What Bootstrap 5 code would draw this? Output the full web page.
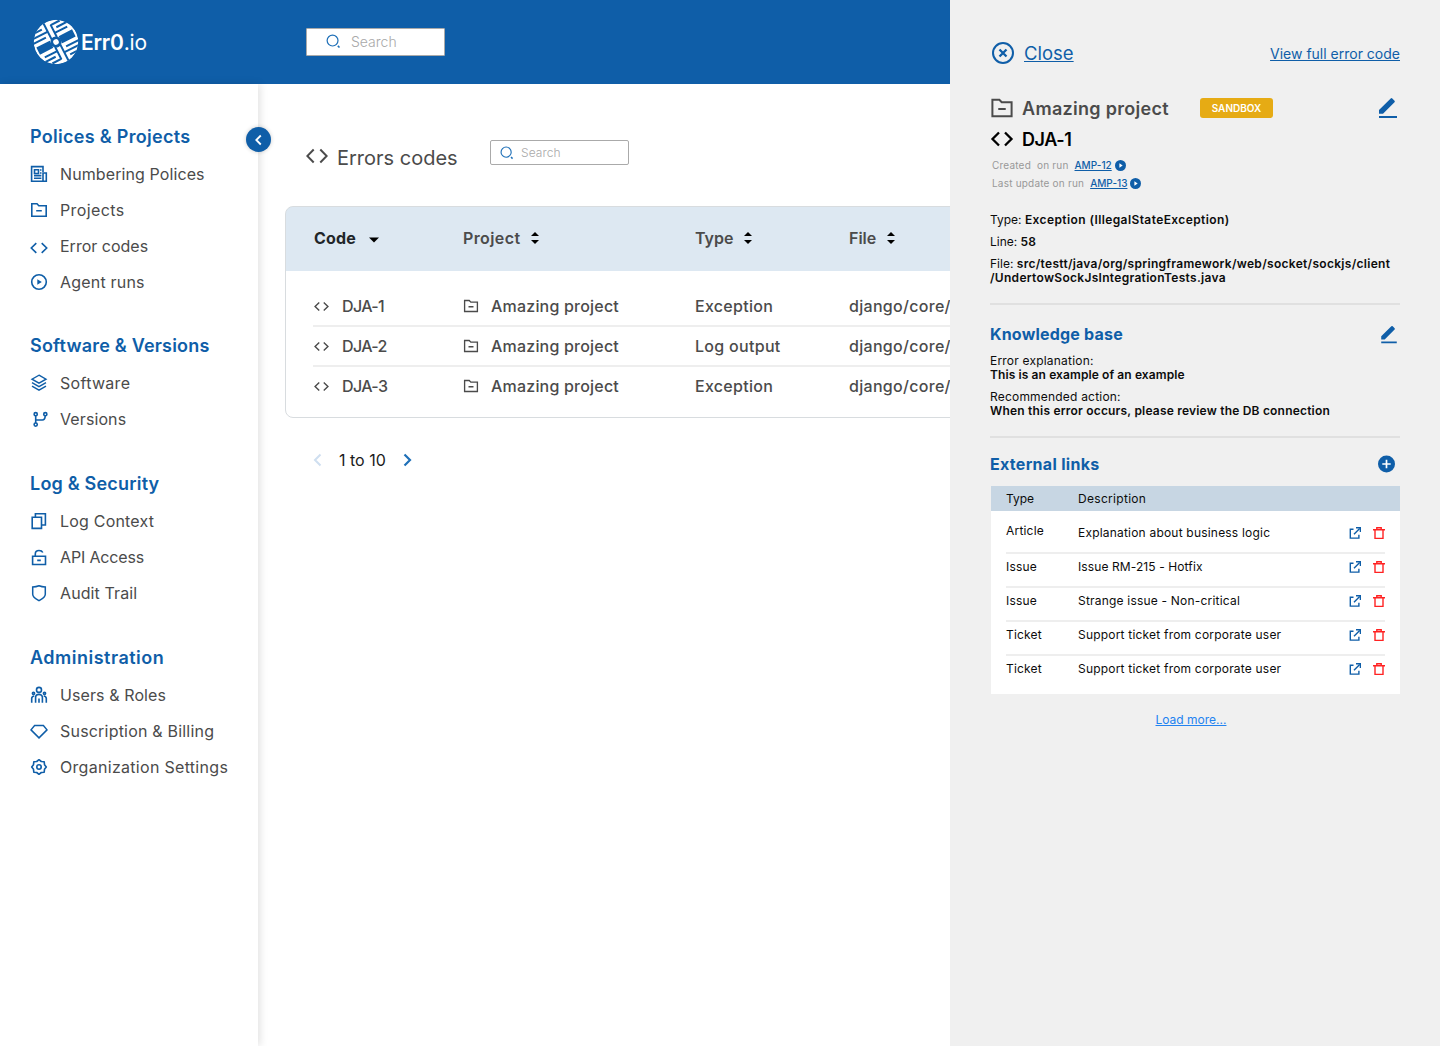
<!DOCTYPE html>
<html lang="en">
<head>
<meta charset="utf-8">
<meta name="viewport" content="width=device-width, initial-scale=1">
<title>Err0.io - Errors codes</title>
<link href="https://cdn.jsdelivr.net/npm/bootstrap@5.3.0/dist/css/bootstrap.min.css" rel="stylesheet">
<style>
:root{--brand:#0f5ea8;--ink:#4b4b4b}
body{font-family:Inter,"Liberation Sans",sans-serif;font-size:16px;color:var(--ink);background:#fff}
svg{display:block;flex:none;fill:none;stroke:currentColor}
a{color:var(--brand);text-underline-offset:1px;text-decoration-thickness:1px}
.ls-1{letter-spacing:.1px}.ls-2{letter-spacing:.2px}.ls-3{letter-spacing:.3px}.ls-4{letter-spacing:.4px}.ls-5{letter-spacing:.5px}
.ls-n1{letter-spacing:-.15px}
.brand-ink{color:var(--brand)}
.danger-ink{color:#f22;margin-left:12px}
.shell{height:1046px}
.topbar{height:84px;background:var(--brand);padding-left:33px}
.logo-name{font-size:21px;font-weight:600;letter-spacing:-.2px;margin-left:2px;width:225px;line-height:1}
.logo-name span{font-weight:400;letter-spacing:-.2px}
.searchbox{width:139px;border:1px solid #aaa;border-radius:1px;background:#fff;color:#a9a9a9;font-weight:300}
.searchbox svg{color:#1f70b8}
.search-top{height:28px;font-size:14px;padding-left:19px;gap:10px;padding-bottom:1px}
.search-page{height:25px;font-size:12px;padding:1px 0 0 9px;gap:7px;border-radius:2px;margin-top:-8px}
.sidebar{width:258px;padding:34px 0 0 30px;box-shadow:2px 0 8px rgba(0,0,0,.12);background:#fff;z-index:1}
.side-group{margin-bottom:28px}
.side-group:first-of-type{margin-bottom:27px}
.side-group h2{height:38px;line-height:37px;font-size:18px;font-weight:600;color:var(--brand);margin:0;white-space:nowrap}
.side-item{height:36px;gap:12px;white-space:nowrap}
.side-item svg{color:var(--brand);stroke-width:1.6}
.collapse-btn{left:246px;top:43px;width:25px;height:25px;background:var(--brand);color:#fff;box-shadow:0 0 4px rgba(0,0,0,.2)}
.content{padding:56px 0 0 27px}
.page-head{height:33px;margin:0 0 33px 21px;padding-bottom:1px}
.page-head h1{font-size:20px;font-weight:400;margin:0 0 0 9px;padding-top:3px;width:153px;line-height:1}
.codes{width:720px;height:212px;border:1px solid #d8dcdf;border-radius:8px;overflow:hidden}
.codes-head{height:65px;margin:-1px -1px 0;padding:0 0 2px 28px;background:#dde8f2;border:1px solid #b9cbd9;border-bottom:0;border-radius:8px 8px 0 0;font-weight:600}
.codes-head svg{margin-left:10px}
.codes-head .arrow-down{margin:4px 0 0 13px}
.codes-body{padding:16px 0 0 27px;font-weight:500}
.codes-row{height:40px;border-bottom:2px solid #eee;padding-left:1px}
.codes-row:last-child{height:38px;border:0}
.codes-row .c-code{gap:13px;letter-spacing:-.65px}
.codes-row .c-project{gap:12px}
.c-code{width:149px}.c-project{width:232px}.c-type{width:154px}
.pager{margin:30px 0 0 28px;height:24px;color:#1b1b1b;gap:17px}
.pager .prev{color:#cfdff0}.pager .next{color:#1f70b8}
.panel{width:490px;background:#f0f0f0;padding:36px 40px 0;color:#0c0c0c;font-size:12px}
.close-row{height:34px;margin-bottom:22px}
.close-row .close-link{font-size:18.5px;margin-left:9px;padding-top:2px}
.close-row svg{margin-left:1px}
.close-row .full-link{font-size:14px}
.proj-row{height:32px;font-size:18px;font-weight:600;color:var(--ink)}
.pencil-lg{margin-right:2px}
.tag-sandbox{width:73px;height:20px;border-radius:3px;background:#e6ab14;color:#fff;font-size:10px;font-weight:600;margin-left:31px;letter-spacing:0}
.code-row{height:30px;font-size:18px;font-weight:600;color:#000;margin-bottom:2px}
.code-row span{letter-spacing:-.4px}
.run-row{height:18px;font-size:10px;color:#989898;padding-left:2px;white-space:pre}
.run-row a{margin:0 3px 0 6px;font-weight:500}
.facts{padding-top:8px}
.facts-first{padding-top:21px}
.facts p{margin:0 0 8px;line-height:14px}
.facts b{font-weight:600}
.rule{height:2px;background:#e0e0e0;margin:18px 0 17px}
.rule-links{margin-bottom:14px}
.panel h3{font-size:16px;font-weight:700;color:var(--brand);margin:0;line-height:24px}
.facts p:last-child{margin:0}
.links{margin:10px 0 0 1px;background:#fff}
.links-head{height:25px;background:#c7d6e3;padding:0 15px}
.links-body{padding:9px 15px 12px}
.links-row{height:34px;padding-bottom:6px;border-bottom:2px solid #eee;letter-spacing:.2px}
.links-row:last-child{height:26px;padding:0;border:0}
.l-type{width:72px}
.more-row{padding:17px 8px 0 0}
.more-row a{color:#2383f0}
</style>
<script src="https://cdn.jsdelivr.net/npm/bootstrap@5.3.0/dist/js/bootstrap.bundle.min.js"></script>
</head>
<body>
<svg width="0" height="0" class="position-absolute" aria-hidden="true">
<symbol id="i-search" viewBox="0 0 16 16"><circle cx="7" cy="7" r="5.8" stroke-width="1.3"/><path d="M12.6 12.6l1.8 1.8" stroke-width="1.7"/></symbol>
<symbol id="i-code" viewBox="0 0 18 18"><path d="M6.3 4.2L1.3 9l5 4.800M11.700 4.200L16.700 9l-5 4.800"/></symbol>
<symbol id="i-folder" viewBox="0 0 18 18"><path d="M1.800 2.800H7l1.800 1.900h7.400v10.500H1.800zM6.200 9.800h5.600"/></symbol>
<symbol id="i-play" viewBox="0 0 18 18"><circle cx="9" cy="9" r="7.300"/><path d="M7.300 6.300v5.400L11.800 9z" fill="currentColor" stroke="none"/></symbol>
<symbol id="i-news" viewBox="0 0 18 18"><path d="M13 7V1.600H1.600v14.600h14.700V8H13v8M4.500 4.700h4v3.800h-4zM10 5h1.500M10 8h1.500M4 10.600h7.400M4 13.300h7.400"/></symbol>
<symbol id="i-layers" viewBox="0 0 18 18"><path d="M9 1.200l7 4-7 4-7-4zM2 8.600l7 4 7-4M2 12.200l7 4 7-4" stroke-width="1.400"/></symbol>
<symbol id="i-branch" viewBox="0 0 18 18"><circle cx="5.700" cy="4.200" r="1.600"/><circle cx="5.700" cy="14.600" r="1.600"/><circle cx="15.300" cy="4.200" r="1.600"/><path d="M5.700 5.800v7.200M5.700 10h6.500q3 0 3-4.200"/></symbol>
<symbol id="i-copy" viewBox="0 0 18 18"><path d="M2.200 5.300h9.300v11.100H2.200zM5.400 5V1.700h10v11.300h-3.600"/></symbol>
<symbol id="i-lock" viewBox="0 0 18 18"><path d="M2.600 8.300h12.900v8.200H2.600zM5.300 8.300V6q0-3.500 3.700-3.500 2.900 0 3.800 2M7.200 12.400h3.600"/></symbol>
<symbol id="i-shield" viewBox="0 0 18 18"><path d="M9 1.800c2.500 1 4.300 1.200 6.300 1.200v7.200c0 3.300-3.400 4.700-6.300 6.500-2.900-1.800-6.300-3.200-6.300-6.500V3C4.700 3 6.500 2.800 9 1.800z" stroke-width="1.500"/></symbol>
<symbol id="i-users" viewBox="0 0 18 18"><circle cx="9" cy="3.900" r="2.500"/><path d="M5.600 16.800V11.500c0-4.200 6.800-4.200 6.800 0v5.300M9 12.600v4.200M1.700 16.800v-4.500q.2-2 2.600-2.300M16.300 16.800v-4.500q-.2-2-2.600-2.300"/><circle cx="3.500" cy="7.300" r="1.100"/><circle cx="14.500" cy="7.300" r="1.100"/></symbol>
<symbol id="i-gem" viewBox="0 0 18 18"><path d="M4.600 3.500h8.800L17 7.900l-8 8-8-8z" stroke-width="1.500"/></symbol>
<symbol id="i-gear" viewBox="0 0 18 18"><path d="M9 1.700L11.300 3.500 14.200 3.800 14.500 6.700 16.300 9 14.500 11.300 14.200 14.200 11.300 14.500 9 16.300 6.700 14.500 3.800 14.200 3.500 11.300 1.700 9 3.500 6.700 3.800 3.800 6.700 3.500z" stroke-linejoin="round"/><circle cx="9" cy="9" r="2.200"/></symbol>
<symbol id="i-sort" viewBox="0 0 10 14"><path d="M1 5L5 1l4 4zM1 9l4 4 4-4z" fill="#000" stroke="none"/></symbol>
<symbol id="i-pencil" viewBox="0 0 20 22"><path d="M1 13L12.700 1.500q.8-.8 1.600 0l2.200 2.200q.8.800 0 1.600L5 16.800H1zM1 19h18v2H1z" fill="currentColor" stroke="none"/></symbol>
<symbol id="i-playdot" viewBox="0 0 10 10"><circle cx="5" cy="5" r="5" fill="currentColor" stroke="none"/><path d="M4 3v4l3-2z" fill="#fff" stroke="none"/></symbol>
<symbol id="i-open" viewBox="0 0 12 12"><path d="M4.500 2.200H1.300v8.900h8.600V7.800M5 7.200l5.700-5.700" stroke-width="1.400"/><path d="M7 .8h4.400v4.300" stroke-width="1.400"/></symbol>
<symbol id="i-trash" viewBox="0 0 12 12"><path d="M0 2.800h12M2 3v8.400h8V3M3.800 2.600V.7h4.400v1.900" stroke-width="1.400"/></symbol>
</svg>

<div class="shell d-flex overflow-hidden">
  <div class="d-flex flex-column flex-grow-1 overflow-hidden">
    <header class="topbar d-flex align-items-center text-white">
      <svg width="46" height="46" viewBox="-23 -23 46 46">
        <defs><clipPath id="disc"><circle r="22.300"/></clipPath></defs>
        <g clip-path="url(#disc)" stroke="none"><circle r="22.300" fill="#fff"/>
          <g transform="rotate(-27)" stroke="#0f5ea8" stroke-width="2">
            <path d="M-2.700-23V-4M3-18V-4M2.700 23V4M-3 18V4"/>
            <path d="M3-17.500H13M7-13H23M3-8.700H17M-13 17.500H-3M-23 13H-7M-17 8.700H-3"/>
            <path d="M-23-8.500H-7M-23-13H-3M-23-17.500H-7M23 8.500H7M23 13H3M23 17.500H7"/>
            <path d="M-19-3H-6V3H-19zM19-3H6V3H19z" fill="#0f5ea8"/>
            <circle r="4.200" fill="#fff" stroke-width="2.800"/>
          </g></g>
      </svg>
      <div class="logo-name">Err0<span>.io</span></div>
      <div class="searchbox search-top d-flex align-items-center"><svg width="15" height="15"><use href="#i-search"/></svg><span>Search</span></div>
    </header>
    <div class="d-flex flex-grow-1 position-relative">
      <nav class="sidebar flex-shrink-0">
        <section class="side-group"><h2 class="ls-3">Polices &amp; Projects</h2>
          <div class="side-item d-flex align-items-center"><svg width="18" height="18"><use href="#i-news"/></svg><span class="ls-1">Numbering Polices</span></div>
          <div class="side-item d-flex align-items-center"><svg width="18" height="18"><use href="#i-folder"/></svg><span class="ls-4">Projects</span></div>
          <div class="side-item d-flex align-items-center"><svg width="18" height="18" class="mt-1"><use href="#i-code"/></svg><span>Error codes</span></div>
          <div class="side-item d-flex align-items-center"><svg width="18" height="18"><use href="#i-play"/></svg><span class="ls-2">Agent runs</span></div>
        </section>
        <section class="side-group"><h2 class="ls-2">Software &amp; Versions</h2>
          <div class="side-item d-flex align-items-center"><svg width="18" height="18"><use href="#i-layers"/></svg><span class="ls-3">Software</span></div>
          <div class="side-item d-flex align-items-center"><svg width="18" height="18"><use href="#i-branch"/></svg><span class="ls-1">Versions</span></div>
        </section>
        <section class="side-group"><h2 class="ls-2">Log &amp; Security</h2>
          <div class="side-item d-flex align-items-center"><svg width="18" height="18"><use href="#i-copy"/></svg><span class="ls-2">Log Context</span></div>
          <div class="side-item d-flex align-items-center"><svg width="18" height="18"><use href="#i-lock"/></svg><span class="ls-n1">API Access</span></div>
          <div class="side-item d-flex align-items-center"><svg width="18" height="18"><use href="#i-shield"/></svg><span class="ls-1">Audit Trail</span></div>
        </section>
        <section class="side-group"><h2 class="ls-5">Administration</h2>
          <div class="side-item d-flex align-items-center"><svg width="18" height="18"><use href="#i-users"/></svg><span class="ls-1">Users &amp; Roles</span></div>
          <div class="side-item d-flex align-items-center"><svg width="18" height="18"><use href="#i-gem"/></svg><span class="ls-2">Suscription &amp; Billing</span></div>
          <div class="side-item d-flex align-items-center"><svg width="18" height="18"><use href="#i-gear"/></svg><span class="ls-3">Organization Settings</span></div>
        </section>
      </nav>
      <div class="collapse-btn position-absolute rounded-circle d-flex align-items-center justify-content-center z-3"><svg width="9" height="12" viewBox="0 0 9 12"><path d="M6.800 1.500L2.300 6l4.500 4.500" stroke-width="1.800"/></svg></div>
      <main class="content flex-grow-1 overflow-hidden">
        <div class="page-head d-flex align-items-center">
          <svg width="22" height="22" viewBox="0 0 22 22" stroke-width="2"><path d="M7.700 4.500L1.300 11l6.400 6.500M14.300 4.500l6.400 6.500-6.400 6.500"/></svg>
          <h1>Errors codes</h1>
          <div class="searchbox search-page d-flex align-items-center"><svg width="14" height="14"><use href="#i-search"/></svg><span class="ls-1">Search</span></div>
        </div>
        <div class="codes">
          <div class="codes-head d-flex align-items-center">
            <div class="c-code text-dark fw-bold d-flex align-items-center"><span class="ls-2">Code</span><svg width="10" height="6" viewBox="0 0 10 6" class="arrow-down"><path d="M0 .5h10L5 5.500z" fill="#000" stroke="none"/></svg></div>
            <div class="c-project d-flex align-items-center"><span class="ls-4">Project</span><svg width="10" height="14"><use href="#i-sort"/></svg></div>
            <div class="c-type d-flex align-items-center">Type<svg width="10" height="14"><use href="#i-sort"/></svg></div>
            <div class="d-flex align-items-center">File<svg width="10" height="14"><use href="#i-sort"/></svg></div>
          </div>
          <div class="codes-body">
            <div class="codes-row d-flex align-items-center"><div class="c-code d-flex align-items-center"><svg width="15" height="15" stroke-width="1.700"><use href="#i-code"/></svg><span>DJA-1</span></div><div class="c-project d-flex align-items-center"><svg width="16" height="16" stroke-width="1.500"><use href="#i-folder"/></svg><span class="ls-2">Amazing project</span></div><div class="c-type ls-3">Exception</div><div class="ls-3">django/core/</div></div>
            <div class="codes-row d-flex align-items-center"><div class="c-code d-flex align-items-center"><svg width="15" height="15" stroke-width="1.700"><use href="#i-code"/></svg><span>DJA-2</span></div><div class="c-project d-flex align-items-center"><svg width="16" height="16" stroke-width="1.500"><use href="#i-folder"/></svg><span class="ls-2">Amazing project</span></div><div class="c-type ls-3">Log output</div><div class="ls-3">django/core/</div></div>
            <div class="codes-row d-flex align-items-center"><div class="c-code d-flex align-items-center"><svg width="15" height="15" stroke-width="1.700"><use href="#i-code"/></svg><span>DJA-3</span></div><div class="c-project d-flex align-items-center"><svg width="16" height="16" stroke-width="1.500"><use href="#i-folder"/></svg><span class="ls-2">Amazing project</span></div><div class="c-type ls-3">Exception</div><div class="ls-3">django/core/</div></div>
          </div>
        </div>
        <div class="pager d-flex align-items-center">
          <svg width="9" height="14" viewBox="0 0 9 14" class="prev" stroke-width="2"><path d="M7.500 1.500L2 7l5.500 5.500"/></svg>
          <span>1 to 10</span>
          <svg width="9" height="14" viewBox="0 0 9 14" class="next" stroke-width="2.200"><path d="M1.500 1.500L7 7l-5.500 5.500"/></svg>
        </div>
      </main>
    </div>
  </div>
  <aside class="panel flex-shrink-0">
    <div class="close-row d-flex align-items-center justify-content-between">
      <div class="d-flex align-items-center"><svg width="24" height="24" viewBox="0 0 24 24" class="brand-ink" stroke-width="2"><circle cx="12" cy="12" r="10"/><path d="M8.500 8.500l7 7M15.500 8.500l-7 7" stroke-width="2.300"/></svg><a class="close-link" href="#">Close</a></div>
      <a class="full-link" href="#">View full error code</a>
    </div>
    <div class="proj-row d-flex align-items-center">
      <svg width="24" height="24" stroke-width="1.500"><use href="#i-folder"/></svg><span class="ms-2 ls-3">Amazing project</span>
      <span class="tag-sandbox d-flex align-items-center justify-content-center">SANDBOX</span>
      <svg width="20" height="22" class="ms-auto pencil-lg brand-ink"><use href="#i-pencil"/></svg>
    </div>
    <div class="code-row d-flex align-items-center"><svg width="24" height="22" viewBox="0 0 24 22" stroke-width="2.300"><path d="M9 4.500L2.500 11 9 17.500M15 4.500l6.500 6.500-6.500 6.500"/></svg><span class="ms-2">DJA-1</span></div>
    <div class="run-row d-flex align-items-center"><span class="ls-2">Created  on run</span><a href="#">AMP-12</a><svg width="11" height="11" class="brand-ink"><use href="#i-playdot"/></svg></div>
    <div class="run-row d-flex align-items-center"><span class="ls-2">Last update on run</span><a href="#">AMP-13</a><svg width="11" height="11" class="brand-ink"><use href="#i-playdot"/></svg></div>
    <div class="facts facts-first">
      <p>Type: <b class="ls-4">Exception (IllegalStateException)</b></p>
      <p>Line: <b>58</b></p>
      <p>File: <b class="ls-3">src/testt/java/org/springframework/web/socket/sockjs/client<br>/UndertowSockJsIntegrationTests.java</b></p>
    </div>
    <div class="rule"></div>
    <div class="d-flex align-items-center justify-content-between"><h3 class="ls-2">Knowledge base</h3><svg width="18" height="19" class="pencil-lg brand-ink"><use href="#i-pencil"/></svg></div>
    <div class="facts">
      <p><span class="ls-2">Error explanation:</span><br><b class="ls-1">This is an example of an example</b></p>
      <p><span class="ls-2">Recommended action:</span><br><b class="ls-2">When this error occurs, please review the DB connection</b></p>
    </div>
    <div class="rule rule-links"></div>
    <div class="d-flex align-items-center justify-content-between"><h3 class="ls-3">External links</h3><svg width="18" height="18" viewBox="0 0 18 18" class="me-1 brand-ink"><circle cx="8.500" cy="9" r="8.500" fill="currentColor" stroke="none"/><path d="M8.500 4.800v8.400M4.300 9h8.400" stroke="#fff" stroke-width="1.700"/></svg></div>
    <div class="links">
      <div class="links-head d-flex align-items-center"><span class="l-type">Type</span><span class="ls-3">Description</span></div>
      <div class="links-body">
        <div class="links-row d-flex align-items-center"><span class="l-type pb-1">Article</span><span class="flex-grow-1">Explanation about business logic</span><svg width="12" height="12" class="brand-ink"><use href="#i-open"/></svg><svg width="12" height="12" class="danger-ink"><use href="#i-trash"/></svg></div>
        <div class="links-row d-flex align-items-center"><span class="l-type">Issue</span><span class="flex-grow-1 ls-1">Issue RM-215 - Hotfix</span><svg width="12" height="12" class="brand-ink"><use href="#i-open"/></svg><svg width="12" height="12" class="danger-ink"><use href="#i-trash"/></svg></div>
        <div class="links-row d-flex align-items-center"><span class="l-type">Issue</span><span class="flex-grow-1">Strange issue - Non-critical</span><svg width="12" height="12" class="brand-ink"><use href="#i-open"/></svg><svg width="12" height="12" class="danger-ink"><use href="#i-trash"/></svg></div>
        <div class="links-row d-flex align-items-center"><span class="l-type">Ticket</span><span class="flex-grow-1">Support ticket from corporate user</span><svg width="12" height="12" class="brand-ink"><use href="#i-open"/></svg><svg width="12" height="12" class="danger-ink"><use href="#i-trash"/></svg></div>
        <div class="links-row d-flex align-items-center"><span class="l-type">Ticket</span><span class="flex-grow-1">Support ticket from corporate user</span><svg width="12" height="12" class="brand-ink"><use href="#i-open"/></svg><svg width="12" height="12" class="danger-ink"><use href="#i-trash"/></svg></div>
      </div>
    </div>
    <div class="text-center more-row"><a href="#">Load more...</a></div>
  </aside>
</div>
</body>
</html>
